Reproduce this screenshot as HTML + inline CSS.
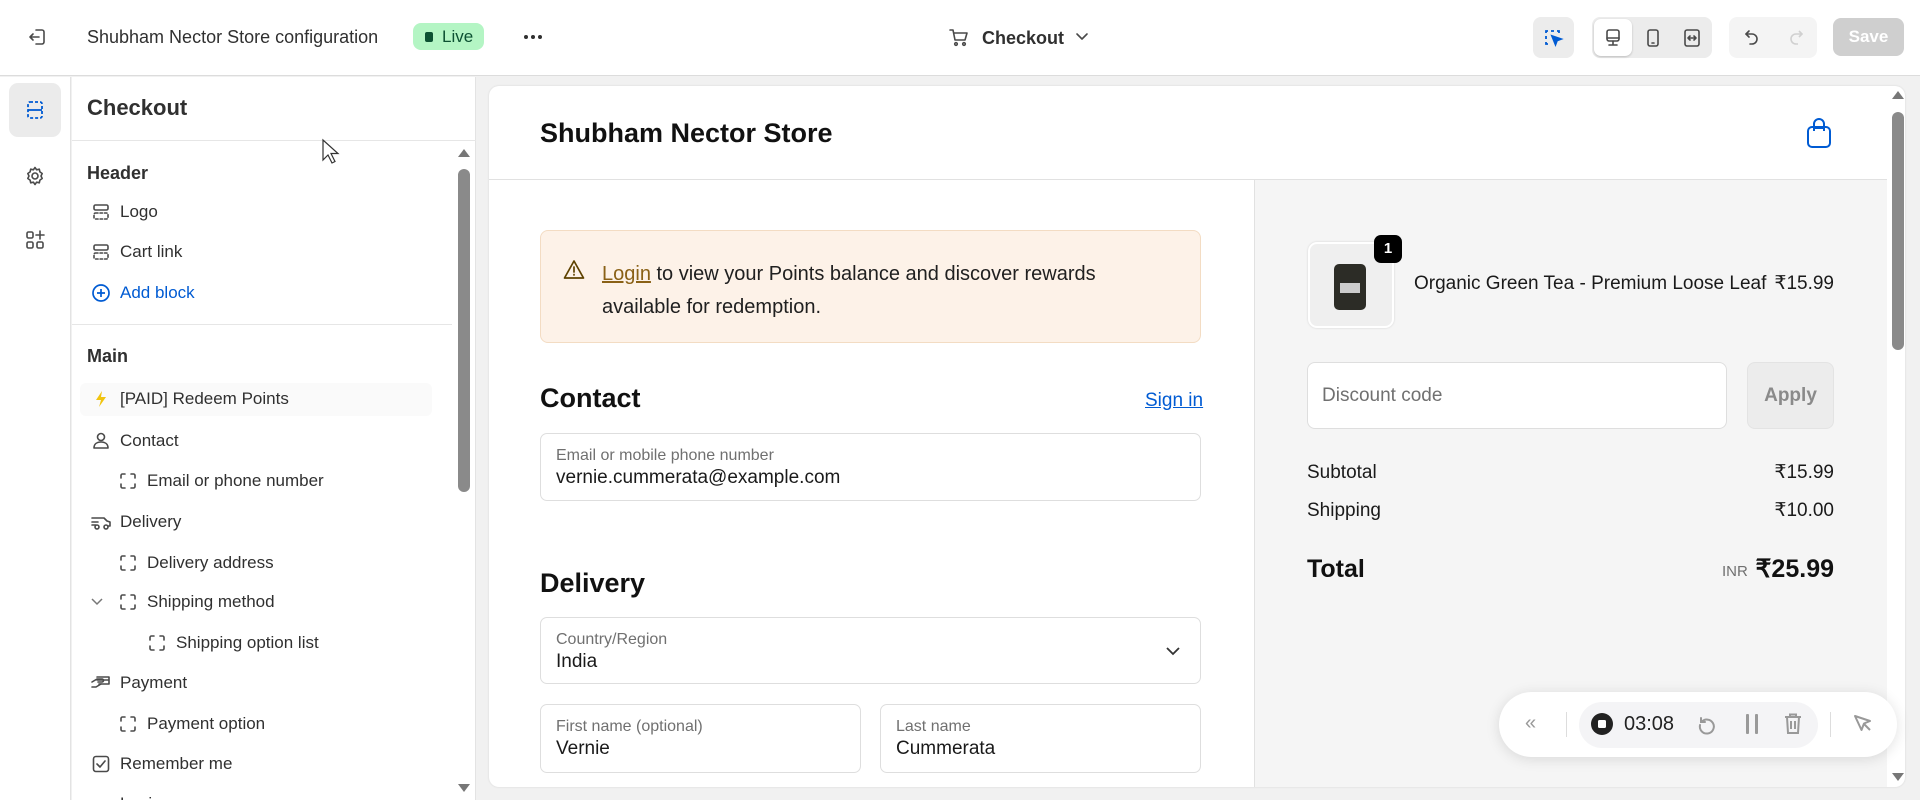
<!DOCTYPE html>
<html><head><meta charset="utf-8">
<style>
*{box-sizing:border-box;margin:0;padding:0}
html,body{width:1920px;height:800px;overflow:hidden}
body{background:#f1f1f1;font-family:"Liberation Sans",sans-serif;color:#303030;position:relative}
.a{position:absolute;white-space:nowrap}
.t{position:absolute;white-space:nowrap;line-height:24px;height:24px}
svg{position:absolute;overflow:visible}
.ic{fill:none;stroke:#4a4a4a;stroke-width:1.6;stroke-linecap:round;stroke-linejoin:round}
.si{font-size:17px;color:#303030}
.fld{position:absolute;background:#fff;border:1px solid #dedede;border-radius:7px}
.lbl{position:absolute;left:15px;font-size:16px;color:#707070;line-height:20px}
.val{position:absolute;left:15px;font-size:19px;color:#1a1a1a;line-height:22px}
</style></head><body>
<!-- top bar -->
<div class="a" style="left:0;top:0;width:1920px;height:76px;background:#fff;border-bottom:1px solid #dcdcdc"></div>
<svg style="left:27px;top:27px" width="20" height="20" viewBox="0 0 20 20" class="ic"><path d="M9 3h6a2 2 0 0 1 2 2v10a2 2 0 0 1-2 2H9"/><path d="M12 10H3M6 7l-3 3 3 3"/></svg>
<div class="t" style="left:87px;top:25px;font-size:18px;color:#303030">Shubham Nector Store configuration</div>
<div class="a" style="left:413px;top:23px;width:71px;height:27px;background:#b4f5c4;border-radius:8px"></div>
<div class="a" style="left:425px;top:32px;width:8px;height:10px;background:#0c5132;border-radius:2px"></div>
<div class="t" style="left:442px;top:25px;font-size:17px;color:#0c5132">Live</div>
<div class="a" style="left:524px;top:35px;width:4px;height:4px;background:#303030;border-radius:50%"></div>
<div class="a" style="left:531px;top:35px;width:4px;height:4px;background:#303030;border-radius:50%"></div>
<div class="a" style="left:538px;top:35px;width:4px;height:4px;background:#303030;border-radius:50%"></div>
<svg style="left:949px;top:28px" width="20" height="20" viewBox="0 0 20 20" class="ic"><path d="M1 2h3l2 10h10l2-7H5"/><circle cx="7" cy="16" r="1.3"/><circle cx="15" cy="16" r="1.3"/></svg>
<div class="t" style="left:982px;top:26px;font-size:18px;font-weight:bold;color:#303030">Checkout</div>
<svg style="left:1076px;top:33px" width="12" height="8" viewBox="0 0 12 8" class="ic"><path d="M1 1l5 5 5-5"/></svg>
<div class="a" style="left:1533px;top:17px;width:41px;height:41px;background:#ececec;border-radius:8px"></div>
<svg style="left:1544px;top:28px" width="20" height="20" viewBox="0 0 20 20" fill="none" stroke="#005bd3" stroke-width="1.8"><path d="M2 5V3h2M7 3h3M13 3h2v2M2 8v3M2 14v2h2"/><path d="M8 8l9 3-4 1.5-1.5 4z" fill="#005bd3"/></svg>
<div class="a" style="left:1592px;top:17px;width:120px;height:41px;background:#ececec;border-radius:8px"></div>
<div class="a" style="left:1594px;top:19px;width:38px;height:37px;background:#fff;border-radius:7px;box-shadow:0 1px 2px rgba(0,0,0,.2)"></div>
<svg style="left:1603px;top:28px" width="20" height="20" viewBox="0 0 20 20" class="ic"><rect x="4" y="2" width="12" height="11" rx="2"/><path d="M4 10h12M10 13v3M6 17h8"/></svg>
<svg style="left:1643px;top:28px" width="20" height="20" viewBox="0 0 20 20" class="ic"><rect x="5" y="2" width="10" height="16" rx="2"/><path d="M9 15h2"/></svg>
<svg style="left:1682px;top:28px" width="20" height="20" viewBox="0 0 20 20" class="ic"><rect x="3" y="2" width="14" height="16" rx="2"/><path d="M6 10h8M8 8l-2 2 2 2M12 8l2 2-2 2"/></svg>
<div class="a" style="left:1729px;top:17px;width:88px;height:41px;background:#f4f4f4;border-radius:8px"></div>
<svg style="left:1742px;top:28px" width="20" height="20" viewBox="0 0 20 20" class="ic" ><path d="M7 3L4 6l3 3"/><path d="M4 6h6a5 5 0 0 1 0 10H8"/></svg>
<svg style="left:1786px;top:28px" width="20" height="20" viewBox="0 0 20 20" fill="none" stroke="#d0d0d0" stroke-width="1.6"><path d="M13 3l3 3-3 3"/><path d="M16 6h-6a5 5 0 0 0 0 10h2"/></svg>
<div class="a" style="left:1833px;top:18px;width:71px;height:38px;background:#cfcfcf;border-radius:8px;color:#fff;font-size:17px;font-weight:bold;text-align:center;line-height:38px">Save</div>

<!-- left rail -->
<div class="a" style="left:0;top:77px;width:71px;height:723px;background:#fff;border-right:1px solid #e3e3e3"></div>
<div class="a" style="left:9px;top:83px;width:52px;height:54px;background:#ebebeb;border-radius:9px"></div>
<svg style="left:25px;top:100px" width="20" height="20" viewBox="0 0 20 20" fill="none" stroke="#005bd3" stroke-width="1.8" stroke-dasharray="3 2"><rect x="3" y="2" width="14" height="16" rx="2"/><path d="M3 10h14" stroke-dasharray="none"/></svg>
<svg style="left:25px;top:166px" width="20" height="20" viewBox="0 0 20 20" class="ic"><circle cx="10" cy="10" r="3"/><path d="M10 1.5l1.6 2.3 2.7-.6.6 2.7 2.3 1.6-1.2 2.5 1.2 2.5-2.3 1.6-.6 2.7-2.7-.6L10 18.5l-1.6-2.3-2.7.6-.6-2.7-2.3-1.6L4 10 2.8 7.5l2.3-1.6.6-2.7 2.7.6z"/></svg>
<svg style="left:25px;top:230px" width="20" height="20" viewBox="0 0 20 20" class="ic"><rect x="2" y="2" width="6" height="6" rx="1.5"/><rect x="2" y="12" width="6" height="6" rx="1.5"/><rect x="12" y="12" width="6" height="6" rx="1.5"/><path d="M15 1v8M11 5h8"/></svg>

<!-- panel -->
<div class="a" style="left:72px;top:77px;width:404px;height:723px;background:#fff;border-right:1px solid #e3e3e3;overflow:hidden"></div>
<div class="t" style="left:87px;top:95px;font-size:22px;font-weight:bold;color:#303030;line-height:26px;height:26px">Checkout</div>
<div class="a" style="left:72px;top:140px;width:404px;height:1px;background:#e6e6e6"></div>
<div class="a" style="left:72px;top:324px;width:380px;height:1px;background:#e6e6e6"></div>
<div class="a" style="left:80px;top:383px;width:352px;height:33px;background:#fafafa;border-radius:6px"></div>
<svg style="left:457px;top:148px" width="14" height="10" viewBox="0 0 14 10"><path d="M1 9L7 1l6 8z" fill="#777"/></svg>
<div class="a" style="left:458px;top:169px;width:12px;height:323px;background:#8a8a8a;border-radius:6px"></div>
<svg style="left:457px;top:783px" width="14" height="10" viewBox="0 0 14 10"><path d="M1 1L7 9l6-8z" fill="#777"/></svg>
<div class="t" style="left:87px;top:161px;font-size:18px;font-weight:bold">Header</div>
<svg style="left:92px;top:203px" width="18" height="18" viewBox="0 0 18 18" class="ic"><rect x="2" y="2" width="14" height="5" rx="1.5"/><rect x="2" y="10" width="14" height="6" rx="1.5" stroke-dasharray="2.5 2"/></svg>
<div class="t si" style="left:120px;top:200px">Logo</div>
<svg style="left:92px;top:243px" width="18" height="18" viewBox="0 0 18 18" class="ic"><rect x="2" y="2" width="14" height="5" rx="1.5"/><rect x="2" y="10" width="14" height="6" rx="1.5" stroke-dasharray="2.5 2"/></svg>
<div class="t si" style="left:120px;top:240px">Cart link</div>
<svg style="left:91px;top:283px" width="20" height="20" viewBox="0 0 20 20" fill="none" stroke="#005bd3" stroke-width="1.7"><circle cx="10" cy="10" r="8"/><path d="M10 6v8M6 10h8"/></svg>
<div class="t si" style="left:120px;top:281px;color:#005bd3">Add block</div>
<div class="t" style="left:87px;top:344px;font-size:18px;font-weight:bold">Main</div>
<svg style="left:94px;top:390px" width="14" height="18" viewBox="0 0 14 18"><path d="M8 1L2 10h5l-2 7 7-10H7z" fill="#f1c40f"/></svg>
<div class="t si" style="left:120px;top:387px">[PAID] Redeem Points</div>
<svg style="left:91px;top:431px" width="20" height="20" viewBox="0 0 20 20" class="ic"><circle cx="10" cy="6" r="3.5"/><path d="M3 17c0-4 3-6 7-6s7 2 7 6z"/></svg>
<div class="t si" style="left:120px;top:429px">Contact</div>
<svg style="left:119px;top:472px" width="18" height="18" viewBox="0 0 18 18" class="ic"><path d="M2 6V3.5A1.5 1.5 0 0 1 3.5 2H6M12 2h2.5A1.5 1.5 0 0 1 16 3.5V6M16 12v2.5a1.5 1.5 0 0 1-1.5 1.5H12M6 16H3.5A1.5 1.5 0 0 1 2 14.5V12"/></svg>
<div class="t si" style="left:147px;top:469px">Email or phone number</div>
<svg style="left:90px;top:512px" width="22" height="20" viewBox="0 0 22 20" class="ic"><path d="M2 6h9l3 0 3 3 3 1v4h-2M2 10h6M2 13h4"/><circle cx="7" cy="15" r="2"/><circle cx="16" cy="15" r="2"/></svg>
<div class="t si" style="left:120px;top:510px">Delivery</div>
<svg style="left:119px;top:554px" width="18" height="18" viewBox="0 0 18 18" class="ic"><path d="M2 6V3.5A1.5 1.5 0 0 1 3.5 2H6M12 2h2.5A1.5 1.5 0 0 1 16 3.5V6M16 12v2.5a1.5 1.5 0 0 1-1.5 1.5H12M6 16H3.5A1.5 1.5 0 0 1 2 14.5V12"/></svg>
<div class="t si" style="left:147px;top:551px">Delivery address</div>
<svg style="left:91px;top:598px" width="12" height="8" viewBox="0 0 12 8" fill="none" stroke="#777" stroke-width="1.5"><path d="M1 1l5 5 5-5"/></svg>
<svg style="left:119px;top:593px" width="18" height="18" viewBox="0 0 18 18" class="ic"><path d="M2 6V3.5A1.5 1.5 0 0 1 3.5 2H6M12 2h2.5A1.5 1.5 0 0 1 16 3.5V6M16 12v2.5a1.5 1.5 0 0 1-1.5 1.5H12M6 16H3.5A1.5 1.5 0 0 1 2 14.5V12"/></svg>
<div class="t si" style="left:147px;top:590px">Shipping method</div>
<svg style="left:148px;top:634px" width="18" height="18" viewBox="0 0 18 18" class="ic"><path d="M2 6V3.5A1.5 1.5 0 0 1 3.5 2H6M12 2h2.5A1.5 1.5 0 0 1 16 3.5V6M16 12v2.5a1.5 1.5 0 0 1-1.5 1.5H12M6 16H3.5A1.5 1.5 0 0 1 2 14.5V12"/></svg>
<div class="t si" style="left:176px;top:631px">Shipping option list</div>
<svg style="left:90px;top:673px" width="22" height="20" viewBox="0 0 22 20" class="ic"><path d="M7 4h12v7H9M7 7h12"/><path d="M2 9l5-3h5a1.5 1.5 0 0 1 0 3H8M2 14l4 0 5-3"/></svg>
<div class="t si" style="left:120px;top:671px">Payment</div>
<svg style="left:119px;top:715px" width="18" height="18" viewBox="0 0 18 18" class="ic"><path d="M2 6V3.5A1.5 1.5 0 0 1 3.5 2H6M12 2h2.5A1.5 1.5 0 0 1 16 3.5V6M16 12v2.5a1.5 1.5 0 0 1-1.5 1.5H12M6 16H3.5A1.5 1.5 0 0 1 2 14.5V12"/></svg>
<div class="t si" style="left:147px;top:712px">Payment option</div>
<svg style="left:92px;top:755px" width="18" height="18" viewBox="0 0 18 18" class="ic"><rect x="1.5" y="1.5" width="15" height="15" rx="2.5"/><path d="M5 9l3 3 5-6"/></svg>
<div class="t si" style="left:120px;top:752px">Remember me</div>
<div class="t si" style="left:120px;top:792px">Login</div>
<!-- mouse cursor -->
<svg style="left:322px;top:139px" width="20" height="26" viewBox="0 0 20 26"><path d="M1 1v20l5-5 4 8 3-1.5-4-8h7z" fill="#fff" stroke="#333" stroke-width="1.2"/></svg>

<!-- preview frame -->
<div class="a" style="left:489px;top:86px;width:1416px;height:701px;background:#fff;border-radius:10px;box-shadow:0 0 2px rgba(0,0,0,.12);overflow:hidden">
  <div class="a" style="left:0;top:93px;width:1398px;height:1px;background:#e1e1e1"></div>
  <div class="a" style="left:765px;top:94px;width:633px;height:620px;background:#f5f5f5;border-left:1px solid #e1e1e1"></div>
</div>
<svg style="left:1891px;top:90px" width="14" height="10" viewBox="0 0 14 10"><path d="M1 9L7 1l6 8z" fill="#777"/></svg>
<div class="a" style="left:1892px;top:112px;width:12px;height:238px;background:#8a8a8a;border-radius:6px"></div>
<svg style="left:1891px;top:772px" width="14" height="10" viewBox="0 0 14 10"><path d="M1 1L7 9l6-8z" fill="#777"/></svg>
<div class="t" style="left:540px;top:116px;font-size:27px;line-height:34px;height:34px;color:#111;font-weight:bold">Shubham Nector Store</div>
<svg style="left:1806px;top:117px" width="26" height="32" viewBox="0 0 26 32" fill="none" stroke="#005bd3" stroke-width="2"><rect x="2" y="10" width="22" height="20" rx="4"/><path d="M8 14V7a5 5 0 0 1 10 0v7"/><path d="M8 11h10"/></svg>

<!-- banner -->
<div class="a" style="left:540px;top:230px;width:661px;height:113px;background:#fdf2e8;border:1px solid #f3dcc3;border-radius:8px"></div>
<svg style="left:563px;top:259px" width="22" height="22" viewBox="0 0 22 22" fill="none" stroke="#5e4200" stroke-width="1.7" stroke-linejoin="round"><path d="M11 2L1.5 19h19z"/><path d="M11 8v5M11 15.5v.5" stroke-linecap="round"/></svg>
<div class="a" style="left:602px;top:258px;font-size:20px;line-height:33px;color:#202020;white-space:normal;width:560px"><span style="color:#8a6116;text-decoration:underline">Login</span> to view your Points balance and discover rewards available for redemption.</div>

<div class="t" style="left:540px;top:382px;font-size:27px;line-height:32px;height:32px;color:#111;font-weight:bold">Contact</div>
<div class="t" style="left:1145px;top:389px;font-size:19px;color:#005bd3;text-decoration:underline">Sign in</div>
<div class="fld" style="left:540px;top:433px;width:661px;height:68px"><div class="lbl" style="top:12px">Email or mobile phone number</div><div class="val" style="top:33px">vernie.cummerata@example.com</div></div>
<div class="t" style="left:540px;top:567px;font-size:27px;line-height:32px;height:32px;color:#111;font-weight:bold">Delivery</div>
<div class="fld" style="left:540px;top:617px;width:661px;height:67px"><div class="lbl" style="top:12px">Country/Region</div><div class="val" style="top:33px">India</div>
<svg style="left:625px;top:29px" width="14" height="9" viewBox="0 0 14 9" fill="none" stroke="#333" stroke-width="1.8"><path d="M1 1l6 6 6-6"/></svg></div>
<div class="fld" style="left:540px;top:704px;width:321px;height:69px"><div class="lbl" style="top:12px">First name (optional)</div><div class="val" style="top:33px">Vernie</div></div>
<div class="fld" style="left:880px;top:704px;width:321px;height:69px"><div class="lbl" style="top:12px">Last name</div><div class="val" style="top:33px">Cummerata</div></div>

<!-- order summary -->
<div class="a" style="left:1308px;top:242px;width:86px;height:86px;background:#efefef;border:2px solid #fff;border-radius:9px;box-shadow:0 0 2px rgba(0,0,0,.15)"></div>
<div class="a" style="left:1334px;top:264px;width:32px;height:46px;background:#2c2c26;border-radius:5px"></div>
<div class="a" style="left:1340px;top:283px;width:20px;height:10px;background:#ccc"></div>
<div class="a" style="left:1374px;top:235px;width:28px;height:28px;background:#000;border-radius:7px;color:#fff;font-size:15px;font-weight:bold;text-align:center;line-height:28px">1</div>
<div class="t" style="left:1414px;top:272px;font-size:19px;color:#1a1a1a">Organic Green Tea - Premium Loose Leaf</div>
<div class="t" style="left:1734px;top:272px;width:100px;text-align:right;font-size:19px;color:#1a1a1a">₹15.99</div>
<div class="a" style="left:1307px;top:362px;width:420px;height:67px;background:#fff;border:1px solid #dedede;border-radius:8px"></div>
<div class="t" style="left:1322px;top:384px;font-size:19px;color:#707070">Discount code</div>
<div class="a" style="left:1747px;top:362px;width:87px;height:67px;background:#ececec;border:1px solid #e3e3e3;border-radius:8px;text-align:center;line-height:65px;font-size:19px;font-weight:bold;color:#8a8a8a">Apply</div>
<div class="t" style="left:1307px;top:461px;font-size:19px;color:#1a1a1a">Subtotal</div>
<div class="t" style="left:1734px;top:461px;width:100px;text-align:right;font-size:19px;color:#1a1a1a">₹15.99</div>
<div class="t" style="left:1307px;top:499px;font-size:19px;color:#1a1a1a">Shipping</div>
<div class="t" style="left:1734px;top:499px;width:100px;text-align:right;font-size:19px;color:#1a1a1a">₹10.00</div>
<div class="t" style="left:1307px;top:553px;font-size:25px;line-height:32px;height:32px;font-weight:bold;color:#111">Total</div>
<div class="t" style="left:1722px;top:560px;font-size:15px;color:#707070">INR</div>
<div class="t" style="left:1734px;top:553px;width:100px;text-align:right;font-size:25px;line-height:32px;height:32px;font-weight:bold;color:#111">₹25.99</div>

<!-- recorder pill -->
<div class="a" style="left:1499px;top:692px;width:398px;height:65px;background:#fff;border-radius:33px;box-shadow:0 2px 14px rgba(0,0,0,.12)"></div>
<div class="t" style="left:1525px;top:711px;font-size:20px;color:#999">«</div>
<div class="a" style="left:1566px;top:712px;width:1px;height:25px;background:#ddd"></div>
<div class="a" style="left:1579px;top:702px;width:239px;height:46px;background:#f4f4f6;border-radius:23px"></div>
<div class="a" style="left:1591px;top:713px;width:22px;height:22px;background:#222;border-radius:50%"></div>
<div class="a" style="left:1598px;top:720px;width:8px;height:8px;background:#fff;border-radius:1.5px"></div>
<div class="t" style="left:1624px;top:712px;font-size:20px;color:#222">03:08</div>
<svg style="left:1697px;top:714px" width="20" height="20" viewBox="0 0 20 20" fill="none" stroke="#999" stroke-width="2" stroke-linecap="round"><path d="M4 4v4h4"/><path d="M4.5 8A7 7 0 1 1 3 11"/></svg>
<div class="a" style="left:1746px;top:714px;width:3px;height:20px;background:#999;border-radius:1px"></div>
<div class="a" style="left:1755px;top:714px;width:3px;height:20px;background:#999;border-radius:1px"></div>
<svg style="left:1784px;top:713px" width="18" height="21" viewBox="0 0 18 21" fill="none" stroke="#999" stroke-width="2"><path d="M1 4h16M6 4V1.5h6V4M3 4l1 16h10l1-16M7 8v8M11 8v8"/></svg>
<div class="a" style="left:1830px;top:712px;width:1px;height:25px;background:#ddd"></div>
<svg style="left:1853px;top:714px" width="20" height="20" viewBox="0 0 20 20" fill="none" stroke="#999" stroke-width="2" stroke-linejoin="round"><path d="M2 2l15 5-6 2.5L8.5 16z"/><path d="M11 10l6 6"/></svg>
</body></html>
